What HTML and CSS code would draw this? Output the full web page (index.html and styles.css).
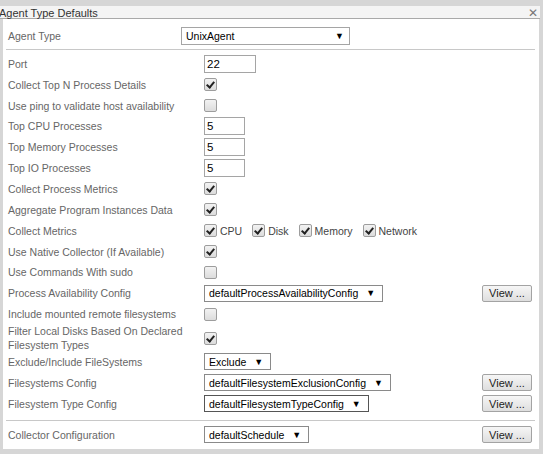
FILE: index.html
```html
<!DOCTYPE html>
<html>
<head>
<meta charset="utf-8">
<link rel="stylesheet" href="styles.css">
</head>
<body>
<div class="frame">
  <div class="titlebar">
    <span class="title">Agent Type Defaults</span>
    <span class="close">✕</span>
  </div>
  <div class="panel">
    <div class="agent-row">
      <span class="label">Agent Type</span>
      <div class="select wide"><span>UnixAgent</span><span class="arrow">▼</span></div>
    </div>
    <div class="sep first"></div>
    <div class="rows">
      <div class="row"><span class="label">Port</span><div class="ctl"><div class="input port">22</div></div></div>
      <div class="row"><span class="label">Collect Top N Process Details</span><div class="ctl"><span class="cb on"></span></div></div>
      <div class="row"><span class="label">Use ping to validate host availability</span><div class="ctl"><span class="cb"></span></div></div>
      <div class="row"><span class="label">Top CPU Processes</span><div class="ctl"><div class="input num">5</div></div></div>
      <div class="row"><span class="label">Top Memory Processes</span><div class="ctl"><div class="input num">5</div></div></div>
      <div class="row"><span class="label">Top IO Processes</span><div class="ctl"><div class="input num">5</div></div></div>
      <div class="row"><span class="label">Collect Process Metrics</span><div class="ctl"><span class="cb on"></span></div></div>
      <div class="row"><span class="label">Aggregate Program Instances Data</span><div class="ctl"><span class="cb on"></span></div></div>
      <div class="row"><span class="label">Collect Metrics</span>
        <div class="ctl metrics">
          <span class="metric"><span class="cb on"></span>CPU</span>
          <span class="metric"><span class="cb on"></span>Disk</span>
          <span class="metric"><span class="cb on"></span>Memory</span>
          <span class="metric"><span class="cb on"></span>Network</span>
        </div>
      </div>
      <div class="row"><span class="label">Use Native Collector (If Available)</span><div class="ctl"><span class="cb on"></span></div></div>
      <div class="row"><span class="label">Use Commands With sudo</span><div class="ctl"><span class="cb"></span></div></div>
      <div class="row"><span class="label">Process Availability Config</span><div class="ctl"><div class="select"><span>defaultProcessAvailabilityConfig</span><span class="arrow">▼</span></div></div><button class="btn">View ...</button></div>
      <div class="row"><span class="label">Include mounted remote filesystems</span><div class="ctl"><span class="cb"></span></div></div>
      <div class="row tall"><span class="label">Filter Local Disks Based On Declared<br>Filesystem Types</span><div class="ctl"><span class="cb on"></span></div></div>
      <div class="row"><span class="label">Exclude/Include FileSystems</span><div class="ctl"><div class="select"><span>Exclude</span><span class="arrow">▼</span></div></div></div>
      <div class="row"><span class="label">Filesystems Config</span><div class="ctl"><div class="select"><span>defaultFilesystemExclusionConfig</span><span class="arrow">▼</span></div></div><button class="btn">View ...</button></div>
      <div class="row"><span class="label">Filesystem Type Config</span><div class="ctl"><div class="select dark"><span>defaultFilesystemTypeConfig</span><span class="arrow">▼</span></div></div><button class="btn">View ...</button></div>
    </div>
    <div class="sep second"></div>
    <div class="rows">
      <div class="row"><span class="label">Collector Configuration</span><div class="ctl"><div class="select"><span>defaultSchedule</span><span class="arrow">▼</span></div></div><button class="btn">View ...</button></div>
    </div>
  </div>
</div>
</body>
</html>
```
FILE: styles.css
```css
html, body {
  margin: 0;
  padding: 0;
  background: #d6d6d6;
}
body {
  font-family: "Liberation Sans", Arial, sans-serif;
  font-size: 10.5px;
  width: 543px;
  height: 454px;
  overflow: hidden;
}
.frame {
  padding-top: 6px;
  width: 543px;
  height: 454px;
  box-sizing: border-box;
}
.titlebar {
  width: 540px;
  height: 12px;
  background: #f4f4f4;
  border-bottom: 1px solid #a9a9a9;
  display: flex;
  align-items: center;
  justify-content: space-between;
}
.title {
  color: #333;
  font-size: 11px;
  margin-left: -1px;
  line-height: 12px;
  margin-top: 1px;
}
.close {
  color: #777;
  font-size: 12px;
  margin-right: 2px;
  line-height: 12px;
  margin-top: 2px;
}
.panel {
  margin-left: 3px;
  width: 536px;
  height: 430px;
  background: #fff;
  padding: 8px 7px 0 5px;
  box-sizing: border-box;
}
.label {
  color: #666;
  line-height: 14px;
}
.agent-row {
  display: grid;
  grid-template-columns: 173px 169px;
  align-items: center;
  height: 18px;
}
.sep {
  height: 1px;
  background: #c8c8c8;
  margin-left: -2px;
  width: 529px;
}
.sep.first {
  margin-top: 4px;
  margin-bottom: 3.5px;
}
.sep.second {
  margin-top: 5.5px;
  margin-bottom: 4px;
}
.rows {
  display: flex;
  flex-direction: column;
}
.row {
  display: grid;
  grid-template-columns: 196px 1fr 50px;
  align-items: center;
  height: 20.85px;
}
.row.tall {
  height: 27px;
}
.ctl {
  display: flex;
  align-items: center;
}
.input {
  box-sizing: border-box;
  height: 18px;
  border: 1px solid #a5a5a5;
  color: #000;
  padding-left: 2px;
  line-height: 16px;
  font-size: 11.5px;
}
.input.port { width: 52px; }
.input.num { width: 41px; }
.cb {
  display: inline-block;
  box-sizing: border-box;
  width: 13px;
  height: 13px;
  border: 1px solid #9d9d9d;
  border-radius: 2px;
  background: linear-gradient(#f2f2f2, #dcdcdc);
  position: relative;
}
.cb.on::after {
  content: "";
  position: absolute;
  left: 3px;
  top: 1px;
  width: 3px;
  height: 6px;
  border: solid #222;
  border-width: 0 2px 2px 0;
  transform: rotate(40deg);
}
.metrics {
  gap: 10px;
}
.metric {
  display: flex;
  align-items: center;
  gap: 3px;
  color: #444;
}
.select {
  box-sizing: border-box;
  height: 17px;
  border: 1px solid #8a8a8a;
  display: inline-flex;
  align-items: center;
  padding: 0 7px 0 4px;
  gap: 8px;
  color: #000;
  white-space: nowrap;
}
.select.dark { border-color: #555; }
.select.wide {
  width: 169px;
  height: 18px;
  justify-content: space-between;
  border-color: #a5a5a5;
  padding: 0 5px 0 4px;
}
.arrow {
  font-size: 9px;
  color: #000;
}
.btn {
  box-sizing: border-box;
  width: 50px;
  height: 17px;
  border: 1px solid #a3a3a3;
  border-radius: 2px;
  background: linear-gradient(#f6f6f6, #dedede);
  font-family: "Liberation Sans", Arial, sans-serif;
  font-size: 11px;
  color: #222;
  padding: 0;
}
```
